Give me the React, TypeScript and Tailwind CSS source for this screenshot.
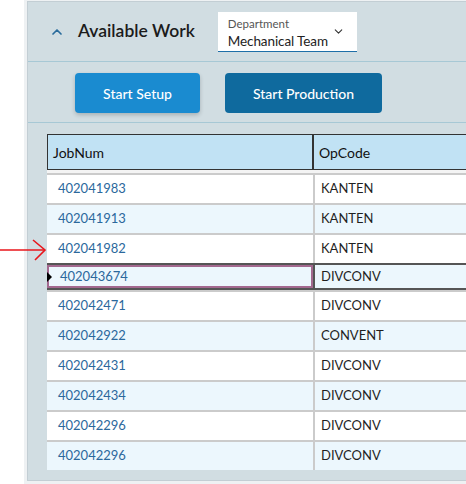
import { ChevronDown, ChevronUp } from 'lucide-react';

interface WorkRow {
  job: string;
  op: string;
  selected?: boolean;
}

const ROWS: WorkRow[] = [
  { job: '402041983', op: 'KANTEN' },
  { job: '402041913', op: 'KANTEN' },
  { job: '402041982', op: 'KANTEN' },
  { job: '402043674', op: 'DIVCONV', selected: true },
  { job: '402042471', op: 'DIVCONV' },
  { job: '402042922', op: 'CONVENT' },
  { job: '402042431', op: 'DIVCONV' },
  { job: '402042434', op: 'DIVCONV' },
  { job: '402042296', op: 'DIVCONV' },
  { job: '402042296', op: 'DIVCONV' },
];

const App = () => {
  return (
    <div className="relative h-[484px] w-[466px] overflow-hidden bg-white font-['Lato','Noto_Sans',sans-serif]">
      {/* annotation arrow */}
      <svg className="absolute left-0 top-[239px] z-10" width="48" height="22" viewBox="0 0 48 22">
        <path d="M0 11 H44" stroke="#e8151b" strokeWidth="1.4" fill="none" />
        <path d="M33 1 L45 11 L35 21" stroke="#e8151b" strokeWidth="1.6" fill="none" />
      </svg>

      <div className="ml-[24px] h-full w-[520px] bg-[#eef1f3] pl-[3px] pt-px">
        <div className="h-[480px] w-[510px] border border-[#c3ced4] bg-[#d1dde2]">
          {/* header */}
          <div className="flex h-[60px] items-center border-b border-[#a7c8d5] pl-[21px]">
            <ChevronUp size={16} strokeWidth={2.6} className="text-[#2a6c9c]" />
            <h2 className="ml-[13px] text-[17.5px] font-semibold text-[#1b1b1b]">Available Work</h2>
            <div className="ml-[23px] flex h-[40px] w-[139px] items-center justify-between border-b-[1.5px] border-[#1f6fa8] bg-white pl-[10px] pr-[12px]">
              <div className="flex translate-y-[2px] flex-col whitespace-nowrap leading-none">
                <span className="text-[11.5px] text-[#555]">Department</span>
                <span className="mt-[5px] text-[13.5px] tracking-[-0.1px] text-[#222]">Mechanical Team</span>
              </div>
              <ChevronDown size={13} strokeWidth={2} className="shrink-0 text-[#333]" />
            </div>
          </div>

          {/* actions */}
          <div className="flex h-[61px] items-start gap-[25px] border-b border-[#a7c8d5] pl-[47px] pt-[11px]">
            <button className="h-[40px] w-[125px] rounded-[4px] bg-[#1a8bd0] text-[14px] font-medium text-white shadow-[0_2px_4px_rgba(0,0,0,0.2)]">
              Start Setup
            </button>
            <button className="h-[40px] w-[157px] rounded-[4px] bg-[#0f6a9e] text-[14px] font-medium text-white">
              Start Production
            </button>
          </div>

          {/* table */}
          <div className="ml-[19px] mt-[11px] w-[480px]">
            <div className="flex h-[36px] border border-[#333] bg-[#c1e2f4] text-[14px] text-[#111]">
              <div className="flex w-[266px] items-center border-r-2 border-[#333] pl-[5px]">JobNum</div>
              <div className="flex items-center pl-[5px]">OpCode</div>
            </div>
            <div className="bg-[#f4f4f4] pt-[3px]">
              {ROWS.map((r, i) => (
                <div
                  key={i}
                  className={`relative flex text-[13px] ${
                    r.selected
                      ? 'h-[27px] border-y-2 border-[#555] bg-[#ecf7fd]'
                      : `h-[30px] border-t-2 border-[#cbcbcb] ${i % 2 === 0 ? 'bg-white' : 'bg-[#ecf7fd]'}`
                  }`}
                >
                  {r.selected && (
                    <span className="absolute left-0 top-[7px] h-0 w-0 border-y-[5px] border-l-[5px] border-y-transparent border-l-black" />
                  )}
                  <div
                    className={`flex w-[266px] pl-[11px] text-[#2b689c] ${
                      r.selected ? 'items-center border-2 border-[#a3698f] pl-[9px]' : 'items-start pt-[4px]'
                    }`}
                  >
                    {r.job}
                  </div>
                  <div className={`flex items-center pl-[6px] text-[#1f1f1f] ${r.selected ? 'border-l-2 border-[#555]' : 'border-l-2 border-[#cbcbcb]'}`}>
                    {r.op}
                  </div>
                </div>
              ))}
            </div>
          </div>
        </div>
      </div>
    </div>
  );
};

export default App;
